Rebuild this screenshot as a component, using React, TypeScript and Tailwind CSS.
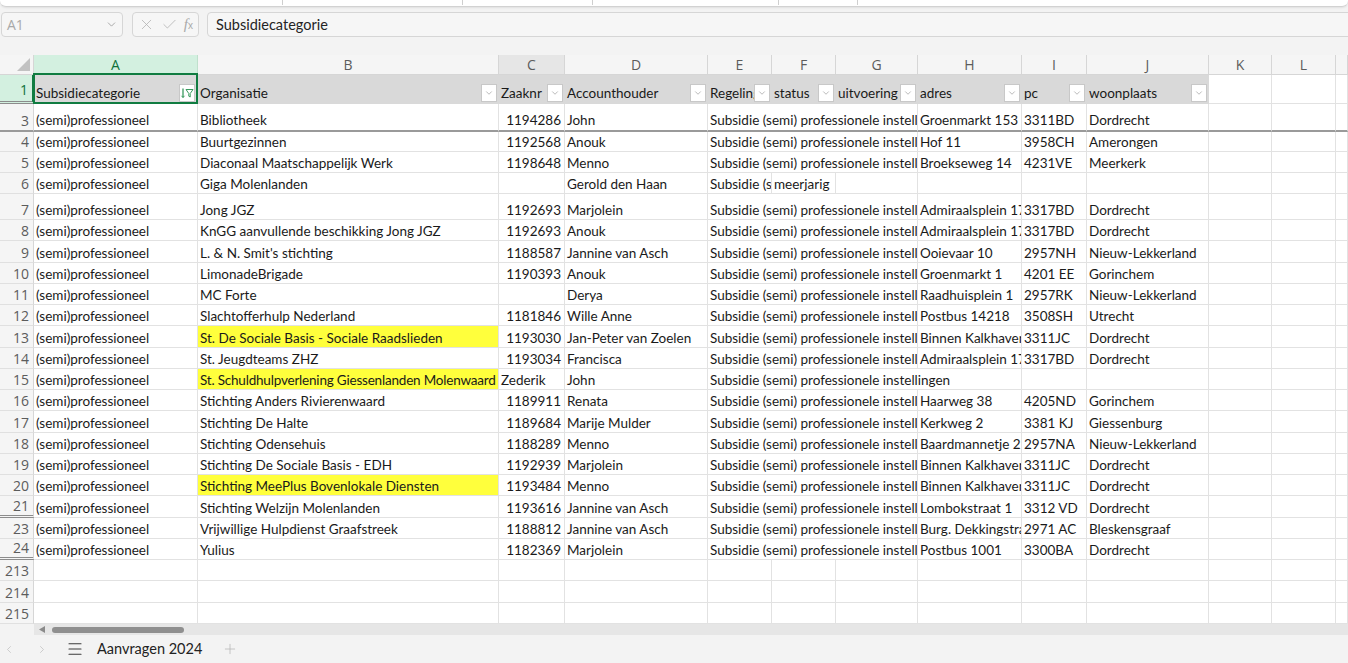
import React from "react";
import { ChevronDown, ChevronLeft, ChevronRight, Menu, Plus, X, Check } from "lucide-react";

type Cell = string | number | null | undefined;
type Row = { n: number; h: number; cells: Cell[]; yellow?: boolean; hiddenAfter?: boolean };

const COLS = [
  { l: "A", w: 164 },
  { l: "B", w: 301 },
  { l: "C", w: 66 },
  { l: "D", w: 143 },
  { l: "E", w: 64 },
  { l: "F", w: 64 },
  { l: "G", w: 82 },
  { l: "H", w: 104 },
  { l: "I", w: 65 },
  { l: "J", w: 122 },
  { l: "K", w: 63 },
  { l: "L", w: 64 },
  { l: "", w: 12 },
];

const S = "(semi)professioneel";
const E = "Subsidie (semi) professionele instellingen";

const HEADERS = ["Subsidiecategorie", "Organisatie", "Zaaknr", "Accounthouder", "Regeling", "status", "uitvoering", "adres", "pc", "woonplaats"];

const ROWS: Row[] = [
  { n: 4, h: 20, cells: [S, "Buurtgezinnen", 1192568, "Anouk", E, null, null, "Hof 11", "3958CH", "Amerongen"] },
  { n: 5, h: 21, cells: [S, "Diaconaal Maatschappelijk Werk", 1198648, "Menno", E, null, null, "Broekseweg 14", "4231VE", "Meerkerk"] },
  { n: 6, h: 21, cells: [S, "Giga Molenlanden", null, "Gerold den Haan", E, "meerjarig", null, null, null, null] },
  { n: 7, h: 26, cells: [S, "Jong JGZ", 1192693, "Marjolein", E, null, null, "Admiraalsplein 17", "3317BD", "Dordrecht"] },
  { n: 8, h: 21, cells: [S, "KnGG aanvullende beschikking Jong JGZ", 1192693, "Anouk", E, null, null, "Admiraalsplein 17", "3317BD", "Dordrecht"] },
  { n: 9, h: 22, cells: [S, "L. & N. Smit's stichting", 1188587, "Jannine van Asch", E, null, null, "Ooievaar 10", "2957NH", "Nieuw-Lekkerland"] },
  { n: 10, h: 21, cells: [S, "LimonadeBrigade", 1190393, "Anouk", E, null, null, "Groenmarkt 1", "4201 EE", "Gorinchem"] },
  { n: 11, h: 21, cells: [S, "MC Forte", null, "Derya", E, null, null, "Raadhuisplein 1", "2957RK", "Nieuw-Lekkerland"] },
  { n: 12, h: 21, cells: [S, "Slachtofferhulp Nederland", 1181846, "Wille Anne", E, null, null, "Postbus 14218", "3508SH", "Utrecht"] },
  { n: 13, h: 22, yellow: true, cells: [S, "St. De Sociale Basis - Sociale Raadslieden", 1193030, "Jan-Peter van Zoelen", E, null, null, "Binnen Kalkhaven 116", "3311JC", "Dordrecht"] },
  { n: 14, h: 21, cells: [S, "St. Jeugdteams ZHZ", 1193034, "Francisca", E, null, null, "Admiraalsplein 17", "3317BD", "Dordrecht"] },
  { n: 15, h: 21, yellow: true, cells: [S, "St. Schuldhulpverlening Giessenlanden Molenwaard", "Zederik", "John", E, null, null, null, null, null] },
  { n: 16, h: 21, cells: [S, "Stichting Anders Rivierenwaard", 1189911, "Renata", E, null, null, "Haarweg 38", "4205ND", "Gorinchem"] },
  { n: 17, h: 22, cells: [S, "Stichting De Halte", 1189684, "Marije Mulder", E, null, null, "Kerkweg 2", "3381 KJ", "Giessenburg"] },
  { n: 18, h: 21, cells: [S, "Stichting Odensehuis", 1188289, "Menno", E, null, null, "Baardmannetje 27", "2957NA", "Nieuw-Lekkerland"] },
  { n: 19, h: 21, cells: [S, "Stichting De Sociale Basis - EDH", 1192939, "Marjolein", E, null, null, "Binnen Kalkhaven 116", "3311JC", "Dordrecht"] },
  { n: 20, h: 21, yellow: true, cells: [S, "Stichting MeePlus Bovenlokale Diensten", 1193484, "Menno", E, null, null, "Binnen Kalkhaven 116", "3311JC", "Dordrecht"] },
  { n: 21, h: 22, hiddenAfter: true, cells: [S, "Stichting Welzijn Molenlanden", 1193616, "Jannine van Asch", E, null, null, "Lombokstraat 1", "3312 VD", "Dordrecht"] },
  { n: 23, h: 21, cells: [S, "Vrijwillige Hulpdienst Graafstreek", 1188812, "Jannine van Asch", E, null, null, "Burg. Dekkingstraat 2", "2971 AC", "Bleskensgraaf"] },
  { n: 24, h: 21, hiddenAfter: true, cells: [S, "Yulius", 1182369, "Marjolein", E, null, null, "Postbus 1001", "3300BA", "Dordrecht"] },
  { n: 213, h: 21, cells: [] },
  { n: 214, h: 22, cells: [] },
  { n: 215, h: 21, cells: [] },
];

const isEmpty = (v: Cell) => v === null || v === undefined || v === "";

function segments(cells: Cell[]) {
  const segs: { i: number; w: number; v: Cell }[] = [];
  let i = 0;
  while (i < COLS.length) {
    const v = cells[i];
    let w = COLS[i].w;
    let j = i + 1;
    if (typeof v === "string" && v) {
      const est = v.length * 6.2 + 6;
      while (j < COLS.length && isEmpty(cells[j]) && w < est) {
        w += COLS[j].w;
        j++;
      }
    }
    segs.push({ i, w, v });
    i = j;
  }
  return segs;
}

function FilterBtn() {
  return (
    <div className="shrink-0 w-[16px] h-[18px] mb-[1px] mr-[1px] bg-white border border-[#c8c8c8] flex items-center justify-center">
      <ChevronDown size={10} strokeWidth={1.4} color="#8a8a8a" />
    </div>
  );
}

function SortFilterBtn() {
  return (
    <div className="shrink-0 w-[16px] h-[18px] mb-[1px] mr-[2px] bg-white border border-[#c8c8c8] flex items-center justify-center">
      <svg width="14" height="12" viewBox="0 0 14 12">
        <line x1="3" y1="1.5" x2="3" y2="10.5" stroke="#3a9a5f" strokeWidth="1.3" />
        <polyline points="1.5,8.8 3,10.5 4.5,8.8" fill="none" stroke="#3a9a5f" strokeWidth="1" />
        <path d="M6 2.5 H13 L10.2 6.5 V10 L8.8 9.2 V6.5 Z" fill="none" stroke="#3a9a5f" strokeWidth="1" strokeLinejoin="round" />
      </svg>
    </div>
  );
}

function RowHeader({ n, h, hidden, freeze, selected }: { n: number; h: number; hidden?: boolean; freeze?: boolean; selected?: boolean }) {
  const border = freeze
    ? "border-b-2 border-b-[#9a9a9a]"
    : hidden
    ? "border-b-[3px] border-double border-b-[#8c8c8c]"
    : "border-b border-b-[#e0e0e0]";
  return (
    <div
      className={`shrink-0 w-[34px] flex items-end justify-end pr-[4px] text-[14px] leading-[18px] font-['Open_Sans',sans-serif] ${
        selected ? "bg-[#d3f0e0] text-[#0f703b] border-r-2 border-r-[#107c41]" : "bg-[#f5f5f5] text-[#5c5c5c] border-r border-r-[#d6d6d6]"
      } ${border}`}
      style={{ height: h }}
    >
      <span className={selected ? "pb-[2px]" : ""}>{n}</span>
    </div>
  );
}

function DataRow({ row }: { row: Row }) {
  const segs = segments(row.cells);
  return (
    <div className="flex">
      <RowHeader n={row.n} h={row.h} hidden={row.hiddenAfter} />
      {segs.map((s, k) => {
        const num = typeof s.v === "number";
        const yellow = row.yellow && s.i === 1;
        const long = typeof s.v === "string" && s.i === 1 && s.v.length > 44;
        return (
          <div
            key={k}
            className={`shrink-0 flex items-end overflow-hidden whitespace-nowrap border-b border-r border-[#e2e2e2] text-[13.5px] leading-[18px] text-[#1a1a1a] ${
              num ? "justify-end pr-[3px]" : "pl-[2px]"
            } ${yellow ? "bg-[#ffff3c]" : "bg-white"} ${long ? "tracking-[-0.2px]" : ""}`}
            style={{ width: s.w, height: row.h }}
          >
            {s.v ?? ""}
          </div>
        );
      })}
    </div>
  );
}

export default function App() {
  return (
    <div className="w-[1348px] h-[663px] overflow-hidden bg-[#f3f3f3] flex flex-col font-['Lato',sans-serif]">
      {/* ribbon remnant */}
      <div className="h-[7px] bg-white border-b border-[#d2d2d2] rounded-b-[6px] shadow-[0_1px_2px_rgba(0,0,0,0.08)] flex">
        <div className="w-[283px] h-[5px] border-r border-[#cfcfcf]" />
        <div className="w-[180px] h-[5px] border-r border-[#cfcfcf]" />
        <div className="w-[130px] h-[5px] border-r border-[#cfcfcf]" />
        <div className="w-[186px] h-[5px] border-r border-[#cfcfcf]" />
        <div className="w-[79px] h-[5px] border-r border-[#cfcfcf]" />
      </div>

      {/* formula bar */}
      <div className="mt-[5px] h-[25px] flex items-stretch">
        <div className="ml-[1px] w-[122px] border border-[#d6d6d6] rounded-[4px] bg-[#f6f6f6] flex items-center justify-between pl-[5px] pr-[4px]">
          <span className="text-[14px] text-[#a9a9a9] font-['Open_Sans',sans-serif]">A1</span>
          <ChevronDown size={13} strokeWidth={1.3} color="#8a8a8a" />
        </div>
        <div className="ml-[9px] w-[67px] border border-[#d6d6d6] rounded-[4px] bg-[#f6f6f6] flex items-center justify-around px-[2px]">
          <X size={17} strokeWidth={1.1} color="#b0b0b0" />
          <Check size={17} strokeWidth={1.1} color="#b0b0b0" />
          <span className="font-['Liberation_Serif',serif] italic text-[15px] text-[#a9a9a9] leading-none">
            f<span className="text-[10px] not-italic font-['Liberation_Sans',sans-serif]">x</span>
          </span>
        </div>
        <div className="ml-[8px] flex-1 -mr-[6px] border border-[#d6d6d6] rounded-[4px] bg-[#f6f6f6] flex items-center pl-[8px]">
          <span className="text-[14.5px] text-[#242424]">Subsidiecategorie</span>
        </div>
      </div>

      {/* grid */}
      <div className="mt-[18px] flex flex-col">
        {/* column headers */}
        <div className="flex h-[20px]">
          <div className="shrink-0 w-[34px] bg-[#f5f5f5] border-r border-b border-[#d6d6d6] flex items-end justify-end pr-[3px] pb-[3px]">
            <svg width="13" height="13" viewBox="0 0 13 13">
              <polygon points="13,0 13,13 0,13" fill="#c2c2c2" />
            </svg>
          </div>
          {COLS.map((c, i) => (
            <div
              key={i}
              className={`shrink-0 flex items-center justify-center text-[14px] font-['Open_Sans',sans-serif] border-r border-b ${
                i === 0
                  ? "bg-[#d3f0e0] text-[#0f703b] border-r-[#bfe0cc] border-b-[#107c41]"
                  : i === 2
                  ? "bg-[#e6e6e6] text-[#5c5c5c] border-[#d6d6d6]"
                  : "bg-[#f5f5f5] text-[#5c5c5c] border-[#d6d6d6]"
              }`}
              style={{ width: c.w }}
            >
              {c.l}
            </div>
          ))}
        </div>

        {/* row 1 - table headers */}
        <div className="flex">
          <RowHeader n={1} h={29} hidden selected />
          {COLS.map((c, i) => (
            <div
              key={i}
              className={`shrink-0 relative flex items-end border-r border-b text-[13.5px] leading-[18px] text-[#1a1a1a] ${
                i < 10 ? "bg-[#d9d9d9] border-[#d9d9d9]" : "bg-white border-[#e2e2e2]"
              }`}
              style={{ width: c.w, height: 29 }}
            >
              {i < 10 && (
                <>
                  <div className="flex-1 min-w-0 overflow-hidden whitespace-nowrap pl-[2px] pb-[1px]">{HEADERS[i]}</div>
                  {i === 0 ? <SortFilterBtn /> : <FilterBtn />}
                </>
              )}
              {i === 0 && <div className="absolute -left-[1px] -top-[2px] -right-[1px] -bottom-[1px] border-2 border-[#107c41] pointer-events-none" />}
            </div>
          ))}
        </div>

        {/* row 3 (frozen) */}
        <div className="flex">
          <RowHeader n={3} h={28} freeze />
          {segments([S, "Bibliotheek", 1194286, "John", E, null, null, "Groenmarkt 153", "3311BD", "Dordrecht"]).map((s, k) => (
            <div
              key={k}
              className={`shrink-0 flex items-end overflow-hidden whitespace-nowrap border-r border-r-[#e2e2e2] border-b-2 border-b-[#9a9a9a] bg-white text-[13.5px] leading-[18px] text-[#1a1a1a] pb-[1px] ${
                typeof s.v === "number" ? "justify-end pr-[3px]" : "pl-[2px]"
              }`}
              style={{ width: s.w, height: 28 }}
            >
              {s.v ?? ""}
            </div>
          ))}
        </div>

        {ROWS.map((r) => (
          <DataRow key={r.n} row={r} />
        ))}
      </div>

      {/* horizontal scrollbar */}
      <div className="h-[11px] flex">
        <div className="w-[34px] shrink-0" />
        <div className="flex-1 bg-[#e6e6e6] flex items-center">
          <svg width="18" height="11" viewBox="0 0 18 11" className="shrink-0">
            <polygon points="5,5.5 11,2 11,9" fill="#8a8a8a" />
          </svg>
          <div className="w-[132px] h-[6px] rounded-full bg-[#8f8f8f]" />
        </div>
      </div>

      {/* sheet tabs */}
      <div className="h-[28px] flex items-center">
        <div className="ml-[3px] w-[12px] flex justify-center">
          <ChevronLeft size={15} strokeWidth={1.3} color="#b8b8b8" />
        </div>
        <div className="ml-[21px] w-[12px] flex justify-center">
          <ChevronRight size={15} strokeWidth={1.3} color="#b8b8b8" />
        </div>
        <div className="ml-[18px]">
          <Menu size={18} strokeWidth={1.5} color="#3c3c3c" />
        </div>
        <div className="ml-[13px] text-[14.5px] text-[#222]">Aanvragen 2024</div>
        <div className="ml-[20px]">
          <Plus size={16} strokeWidth={1.2} color="#b8b8b8" />
        </div>
      </div>
    </div>
  );
}
